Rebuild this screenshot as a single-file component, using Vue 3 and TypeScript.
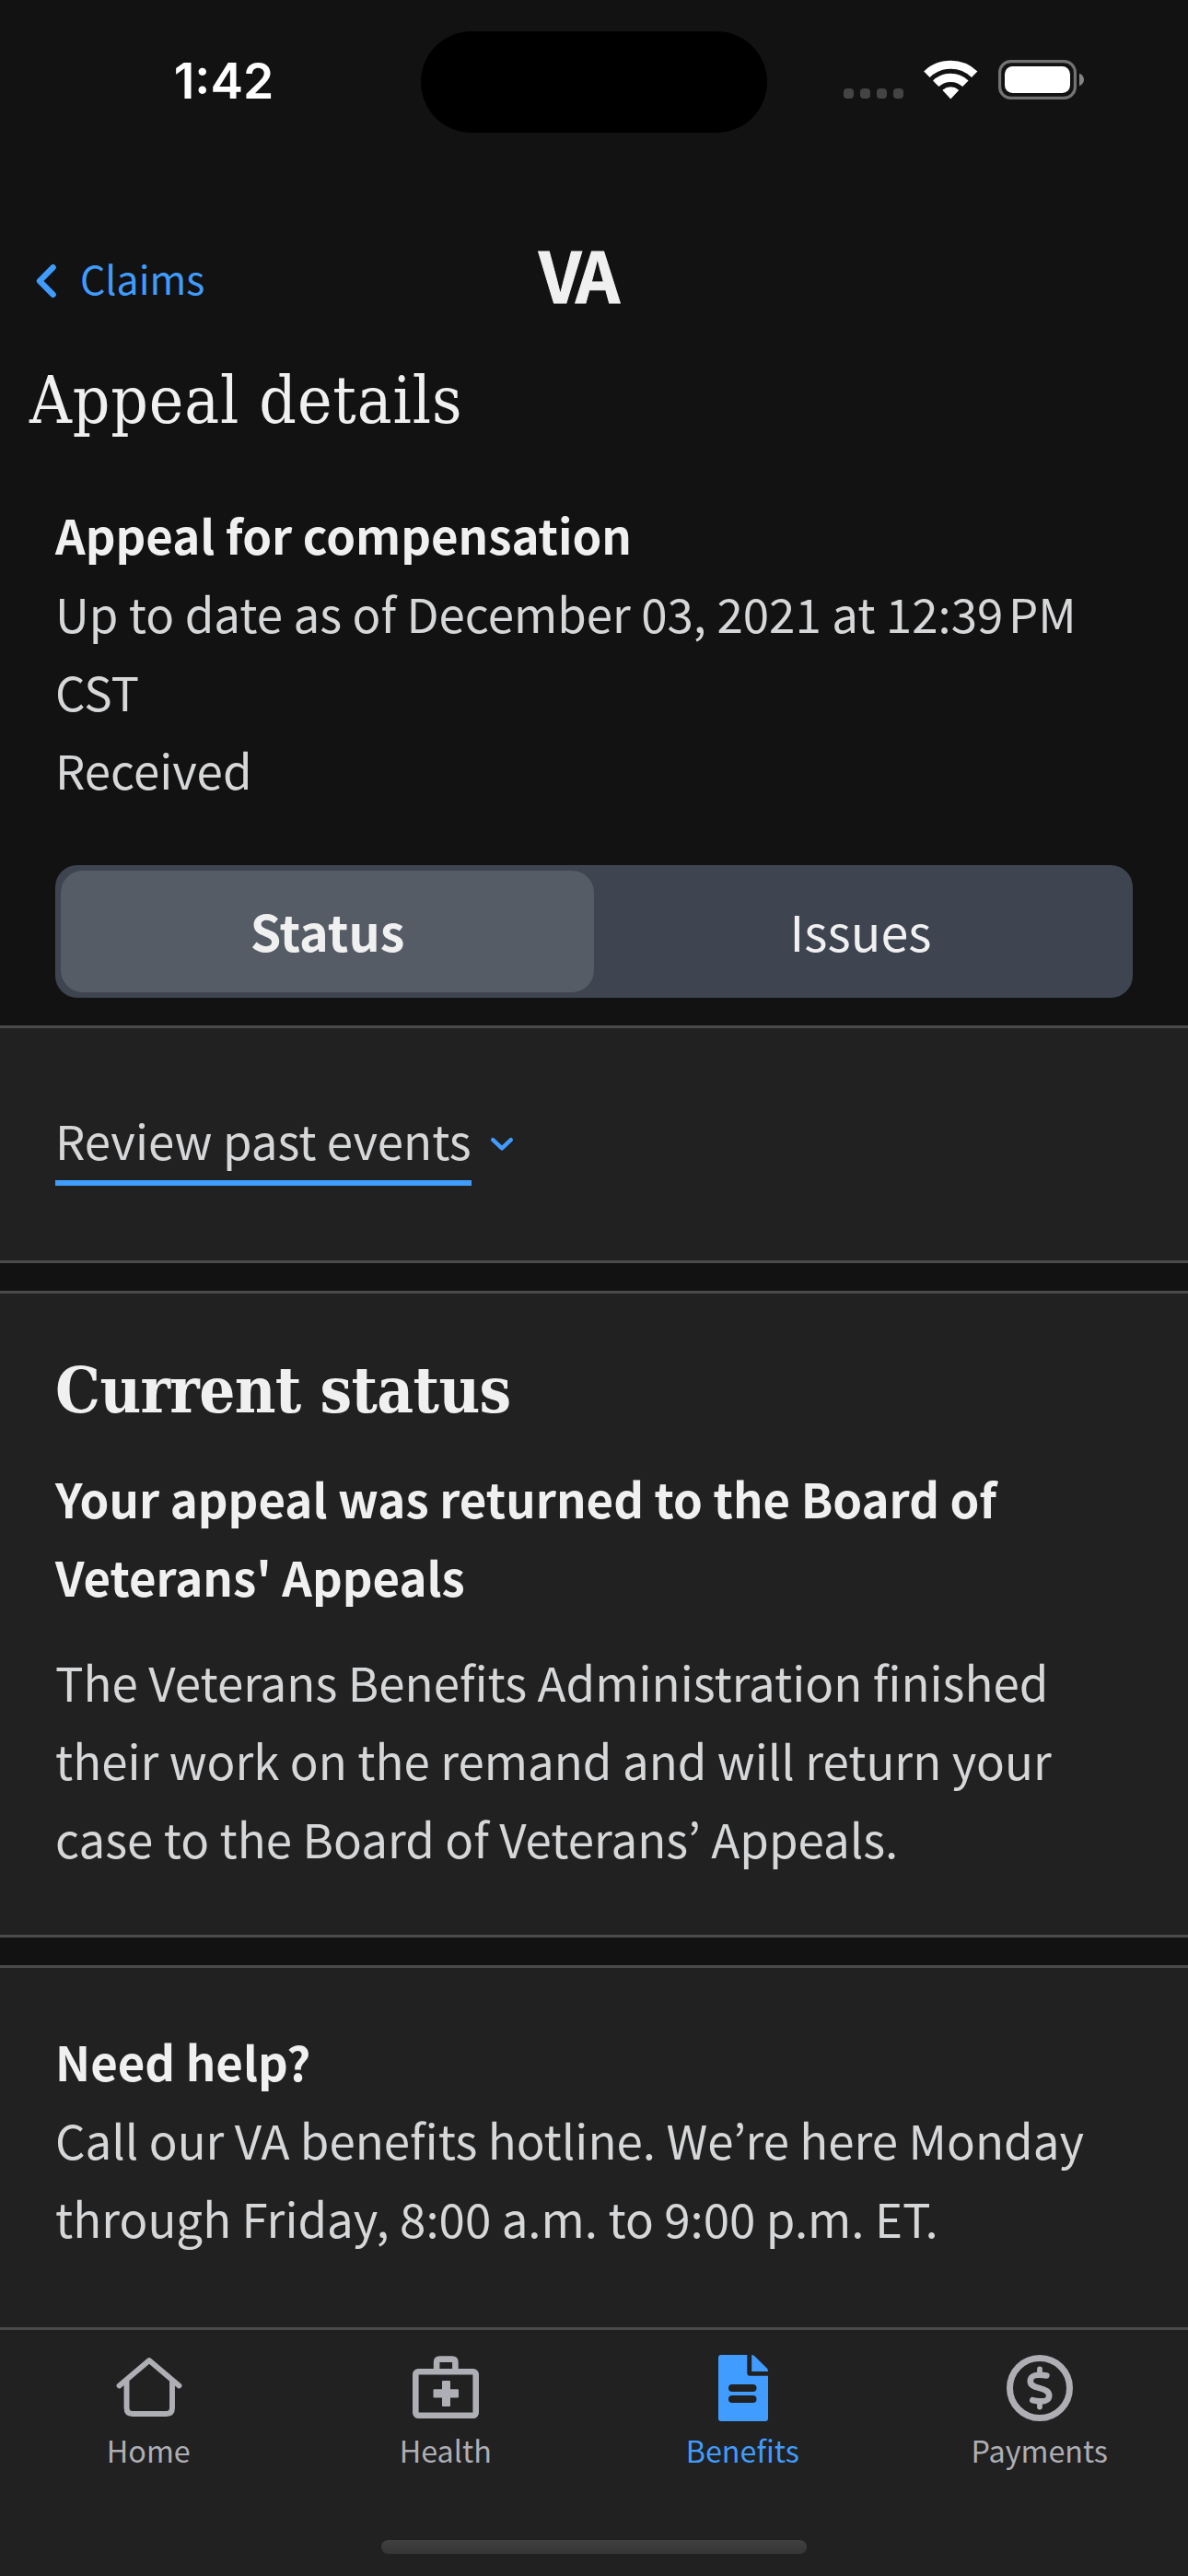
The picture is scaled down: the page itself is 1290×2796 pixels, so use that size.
<script setup lang="ts">
import { ref } from 'vue'

type TabKey = 'home' | 'health' | 'benefits' | 'payments'

interface Tab {
  key: TabKey
  label: string
}

const tabs: Tab[] = [
  { key: 'home', label: 'Home' },
  { key: 'health', label: 'Health' },
  { key: 'benefits', label: 'Benefits' },
  { key: 'payments', label: 'Payments' },
]

const segments: string[] = ['Status', 'Issues']
const activeTab = ref<TabKey>('benefits')
const activeSegment = ref<string>('Status')
const updatedAt = 'Up to date as of December 03, 2021 at 12:39\u202FPM CST'
</script>

<template>
  <div class="screen">
    <header class="status-bar">
      <div class="time">1:42</div>
      <div class="island"></div>
      <svg class="indicators" width="262" height="43" viewBox="0 0 262 43">
        <g fill="#444444">
          <rect x="0" y="31" width="11" height="11" rx="4" />
          <rect x="18" y="31" width="11" height="11" rx="4" />
          <rect x="36" y="31" width="11" height="11" rx="4" />
          <rect x="54" y="31" width="11" height="11" rx="4" />
        </g>
        <g fill="none" stroke="#ffffff" stroke-width="9.2">
          <path d="M90.4 15.7A37.3 37.3 0 0 1 142.2 15.7" />
          <path d="M100.2 25.8A23.2 23.2 0 0 1 132.4 25.8" />
        </g>
        <path d="M116.3 41.6L108.2 32.9A12.6 12.6 0 0 1 124.4 32.9Z" fill="#ffffff" stroke="#ffffff" stroke-width="1.2" stroke-linejoin="round" />
        <rect x="169.6" y="1.6" width="81.8" height="39.8" rx="12" fill="none" stroke="#727272" stroke-width="3.2" />
        <rect x="175" y="7" width="71" height="29" rx="8.5" fill="#ffffff" />
        <path d="M256 14.8C259 15.8 261 18.5 261 21.5S259 27.2 256 28.2Z" fill="#858585" />
      </svg>
    </header>

    <nav class="nav-row">
      <div class="back">
        <svg width="24" height="38" viewBox="0 0 24 38" fill="none" stroke="#409cff" stroke-width="6.4" stroke-linecap="round" stroke-linejoin="round">
          <path d="M19.6 4.2L5 19L19.6 33.8" />
        </svg>
        <span>Claims</span>
      </div>
      <div class="logo">VA</div>
    </nav>

    <h1 class="title">Appeal details</h1>

    <section class="summary">
      <p class="strong">Appeal for compensation</p>
      <p>{{ updatedAt }}</p>
      <p>Received</p>
    </section>

    <div class="segmented">
      <div
        v-for="segment in segments"
        :key="segment"
        class="segment"
        :class="{ active: segment === activeSegment }"
        @click="activeSegment = segment"
      >
        {{ segment }}
      </div>
    </div>

    <section class="card events">
      <span class="events-label">Review past events</span>
      <svg width="26" height="18" viewBox="0 0 26 18" fill="none" stroke="#409cff" stroke-width="4.4" stroke-linecap="round" stroke-linejoin="round">
        <path d="M3.2 4.2L13 13.4L22.8 4.2" />
      </svg>
    </section>

    <section class="card current">
      <h2>Current status</h2>
      <p class="strong">Your appeal was returned to the Board of Veterans' Appeals</p>
      <p class="detail">The Veterans Benefits Administration finished their work on the remand and will return your case to the Board of Veterans’ Appeals.</p>
    </section>

    <section class="card help">
      <p class="strong">Need help?</p>
      <p>Call our VA benefits hotline. We’re here Monday through Friday, 8:00 a.m. to 9:00 p.m. ET.</p>
    </section>

    <footer class="tab-bar">
      <div class="tabs">
        <div
          v-for="tab in tabs"
          :key="tab.key"
          class="tab"
          :class="{ active: tab.key === activeTab }"
          @click="activeTab = tab.key"
        >
          <svg v-if="tab.key === 'home'" width="72" height="72" viewBox="0 0 72 72" fill="none" stroke="currentColor" stroke-width="5.9" stroke-linecap="round" stroke-linejoin="round">
            <path d="M3.5 33.4L36 6L68.5 33.4" />
            <path d="M11.5 28V57.5Q11.5 64 18 64H54.5Q61 64 61 57.5V28" />
          </svg>
          <svg v-else-if="tab.key === 'health'" width="72" height="72" viewBox="0 0 72 72" fill="none" stroke="currentColor" stroke-width="6.6">
            <rect x="3.3" y="18.3" width="65.4" height="47.4" rx="3" />
            <path d="M26.1 17V8Q26.1 4.6 29.5 4.6H43Q46.4 4.6 46.4 8V17" />
            <path d="M32 29Q32 28 33 28H40Q41 28 41 29V37.3H49Q50 37.3 50 38.3V45.5Q50 46.5 49 46.5H41V55Q41 56 40 56H33Q32 56 32 55V46.5H23.5Q22.5 46.5 22.5 45.5V38.3Q22.5 37.3 23.5 37.3H32Z" fill="currentColor" stroke="none" />
          </svg>
          <svg v-else-if="tab.key === 'benefits'" width="72" height="72" viewBox="0 0 72 72" fill="currentColor">
            <path fill-rule="evenodd" d="M12 0H40.3V19.7Q40.3 22.7 43.3 22.7H63V69Q63 72 60 72H12Q9 72 9 69V3Q9 0 12 0ZM24 32A4 4 0 0 0 24 40H46.5A4 4 0 0 0 46.5 32ZM24 44A4 4 0 0 0 24 52H46.5A4 4 0 0 0 46.5 44Z" />
            <path d="M45.2 0Q47 0 48 1L62 14.8Q63 15.8 63 18H45.2Z" />
          </svg>
          <svg v-else width="72" height="72" viewBox="0 0 72 72" fill="none" stroke="currentColor" stroke-linecap="round" stroke-linejoin="round">
            <circle cx="36" cy="36" r="32.5" stroke-width="7" />
            <path d="M43.4 22.4Q40.5 21.8 34.5 21.8C29.3 21.8 25.8 24.6 25.8 28.4C25.8 32.8 29.4 34.4 36 36.1C42.6 37.8 46.2 39.6 46.2 44.2C46.2 48 42.8 50.4 38.6 50.4Q31.5 50.4 28.3 49.2" stroke-width="6.6" />
            <path d="M36 15.5V20M36 52V56.5" stroke-width="5.8" />
          </svg>
          <span>{{ tab.label }}</span>
        </div>
      </div>
      <div class="home-indicator"></div>
    </footer>
  </div>
</template>

<style>
body {
  background: #121212;
}
</style>

<style scoped>
.screen {
  display: flex;
  flex-direction: column;
  width: 1290px;
  height: 2796px;
  overflow: hidden;
  background: #121212;
  color: #d6d7d9;
  font-family: "Noto Sans CJK KR", "Noto Sans", sans-serif;
  font-size: 51.04px;
  line-height: 85px;
}

.screen > * {
  flex-shrink: 0;
  box-sizing: border-box;
}

p,
h1,
h2 {
  margin: 0;
}

.strong {
  color: #f0f0f0;
  font-weight: 700;
  font-size: 50.94px;
}

.status-bar {
  display: flex;
  height: 250px;
  padding-top: 34px;
  align-items: flex-start;
}

.time {
  width: 428px;
  margin-left: 29px;
  line-height: 107px;
  text-align: center;
  color: #ffffff;
  font-family: Inter, "Liberation Sans", sans-serif;
  font-weight: 600;
  font-size: 53.4px;
}

.island {
  width: 376px;
  height: 110px;
  border-radius: 55px;
  background: #000000;
}

.indicators {
  margin: 31px 0 0 83px;
}

.nav-row {
  display: flex;
  align-items: center;
  height: 110px;
}

.back {
  display: flex;
  align-items: center;
  width: 547px;
  padding-left: 38px;
  gap: 25px;
  color: #409cff;
  font-size: 42.9px;
}

.back span {
  padding-bottom: 7px;
}

.logo {
  padding-bottom: 17px;
  color: #f0f0f0;
  font-weight: 700;
  font-size: 75px;
  letter-spacing: -5px;
  -webkit-text-stroke: 1px #f0f0f0;
}

.title {
  margin: 30px 0 0 32px;
  color: #f0f0f0;
  font-family: "DejaVu Serif Condensed", "DejaVu Serif", serif;
  font-weight: 400;
  font-size: 70.6px;
  line-height: 90px;
  letter-spacing: 0.9px;
}

.summary {
  margin-top: 58px;
  padding: 0 60px;
}

.segmented {
  display: flex;
  height: 144px;
  margin: 61px 60px 30px;
  padding: 6px;
  border-radius: 24px;
  background: #3e4551;
  font-size: 53.8px;
}

.segment {
  display: flex;
  flex: 1;
  align-items: center;
  justify-content: center;
  padding-bottom: 3px;
  border-radius: 24px;
  color: #f0f0f0;
}

.segment.active {
  background: #565c65;
  font-weight: 700;
}

.card {
  margin-bottom: 30px;
  padding: 0 60px;
  border-top: 3px solid #4a4a4a;
  border-bottom: 3px solid #4a4a4a;
  background: #212121;
}

.events {
  display: flex;
  align-items: flex-start;
  height: 258px;
  padding-top: 79px;
}

.events-label {
  padding-bottom: 1px;
  border-bottom: 6px solid #409cff;
}

.events svg {
  margin: 38px 0 0 20px;
}

.current {
  height: 702px;
  padding-top: 60px;
}

.current h2 {
  margin-bottom: 30px;
  color: #f0f0f0;
  font-family: "DejaVu Serif Condensed", "DejaVu Serif", serif;
  font-weight: 700;
  font-size: 68.4px;
  line-height: 90px;
  letter-spacing: -0.6px;
}

.detail {
  margin-top: 29px;
}

.help {
  height: 393px;
  margin-bottom: 0;
  padding-top: 59px;
  border-bottom: 0;
}

.tab-bar {
  display: flex;
  flex-direction: column;
  justify-content: space-between;
  height: 270px;
  padding: 27px 0 24px;
  border-top: 3px solid #4a4a4a;
  background: #212121;
}

.tabs {
  display: flex;
}

.tab {
  display: flex;
  flex: 1;
  flex-direction: column;
  align-items: center;
  gap: 8px;
  color: #aeaeb5;
  font-size: 32.3px;
  line-height: 46px;
}

.tab svg {
  margin-left: 1px;
}

.tab.active {
  color: #409cff;
}

.home-indicator {
  align-self: center;
  width: 462px;
  height: 15px;
  border-radius: 8px;
  background: linear-gradient(#404040, #363636);
}
</style>
